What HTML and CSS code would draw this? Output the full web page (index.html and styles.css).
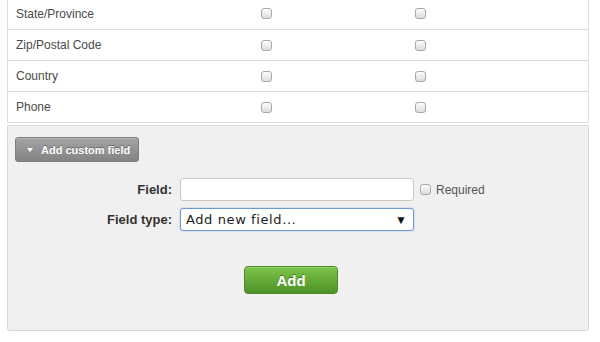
FILE: index.html
```html
<!DOCTYPE html>
<html>
<head>
<meta charset="utf-8">
<link rel="stylesheet" href="styles.css">
</head>
<body>
<div class="wrap">
  <div class="table">
    <div class="row"><span class="name">State/Province</span><span class="cell"><input type="checkbox" class="cb"></span><span class="cell"><input type="checkbox" class="cb"></span></div>
    <div class="row"><span class="name">Zip/Postal Code</span><span class="cell"><input type="checkbox" class="cb"></span><span class="cell"><input type="checkbox" class="cb"></span></div>
    <div class="row"><span class="name">Country</span><span class="cell"><input type="checkbox" class="cb"></span><span class="cell"><input type="checkbox" class="cb"></span></div>
    <div class="row"><span class="name">Phone</span><span class="cell"><input type="checkbox" class="cb"></span><span class="cell"><input type="checkbox" class="cb"></span></div>
  </div>
  <div class="panel">
    <button class="toggle"><span class="tri"></span>Add custom field</button>
    <div class="form">
      <div class="frow">
        <label class="lbl">Field:</label>
        <input type="text" class="text">
        <label class="req"><input type="checkbox" class="cb"> Required</label>
      </div>
      <div class="frow">
        <label class="lbl">Field type:</label>
        <div class="select"><span class="opt">Add new field...</span><span class="arrow">▼</span></div>
      </div>
    </div>
    <div class="actions"><button class="add">Add</button></div>
  </div>
</div>
</body>
</html>
```
FILE: styles.css
```css
html, body { margin: 0; padding: 0; background: #fff; }
body { font-family: "Liberation Sans", Arial, sans-serif; font-size: 12px; color: #4a4a4a; }
.wrap { width: 582px; margin-left: 7px; margin-top: -2px; }
.table { border-left: 1px solid #ddd; border-right: 1px solid #ddd; border-bottom: 1px solid #ddd; }
.row { display: grid; grid-template-columns: 245px 154px 1fr; align-items: center; height: 30px; padding-left: 8px; border-bottom: 1px solid #ddd; }
.row:first-child { height: 31px; }
.row:last-child { border-bottom: none; }
.cell { display: flex; align-items: center; }
.cb { appearance: none; -webkit-appearance: none; margin: 0; width: 11px; height: 11px; border: 1px solid #a9a9a9; border-radius: 3px; background: linear-gradient(#fdfdfd, #dcdcdc); box-sizing: border-box; display: block; }
.panel { margin-top: 2px; border: 1px solid #dadada; border-radius: 0 0 3px 3px; background: #f0f0f0; padding: 11px 7px 36px; box-shadow: 0 1px 0 #ececec; }
.toggle { display: flex; align-items: center; white-space: nowrap; height: 25px; width: 124px; padding: 0 0 0 11px; border: 1px solid #7d7d7d; border-radius: 3px; background: linear-gradient(#a3a3a3, #848484); color: #fff; font-family: "Liberation Sans", Arial, sans-serif; font-weight: bold; font-size: 11px; text-shadow: 0 -1px 0 #666; box-shadow: inset 0 1px 0 #b5b5b5; }
.tri { width: 0; height: 0; border-left: 3px solid transparent; border-right: 3px solid transparent; border-top: 4px solid #fff; margin-right: 8px; }
.form { margin-top: 16px; display: flex; flex-direction: column; gap: 7px; }
.frow { display: flex; align-items: center; height: 23px; }
.lbl { width: 157px; text-align: right; margin-right: 8px; font-weight: bold; color: #333; font-size: 13px; }
.text { width: 234px; height: 23px; box-sizing: border-box; border: 1px solid #c8c8c8; border-radius: 3px; background: #fff; margin: 0; }
.req { display: flex; align-items: center; margin-left: 6px; gap: 5px; color: #555; font-size: 12px; }
.select { width: 234px; height: 23px; box-sizing: border-box; border: 1px solid #6d9bd1; border-radius: 3px; background: #fff; display: flex; align-items: center; justify-content: space-between; padding: 0 6px 0 5px; color: #222; box-shadow: 0 0 2px #9cc0ea; }
.opt { font-family: "DejaVu Sans", sans-serif; font-size: 13px; letter-spacing: 0.6px; }
.arrow { font-size: 12px; color: #111; }
.actions { margin-top: 35px; padding-left: 229px; }
.add { width: 94px; height: 28px; border: 1px solid #4a8a24; border-radius: 4px; background: linear-gradient(#7cc44b, #4f9127); color: #fff; font-family: "Liberation Sans", Arial, sans-serif; font-weight: bold; font-size: 15px; text-shadow: 0 -1px 0 #3e7a1d; box-shadow: inset 0 1px 0 #98d56c; }
```
